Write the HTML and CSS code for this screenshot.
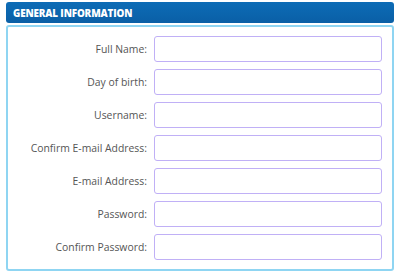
FILE: index.html
```html
<!DOCTYPE html>
<html>
<head>
<meta charset="utf-8">
<link rel="stylesheet" href="styles.css">
</head>
<body>
<div class="wrap">
  <div class="head">GENERAL INFORMATION</div>
  <div class="panel">
    <form class="form">
      <label class="lbl">Full Name:</label><input class="inp" type="text">
      <label class="lbl">Day of birth:</label><input class="inp" type="text">
      <label class="lbl">Username:</label><input class="inp" type="text">
      <label class="lbl">Confirm E-mail Address:</label><input class="inp" type="text">
      <label class="lbl">E-mail Address:</label><input class="inp" type="text">
      <label class="lbl">Password:</label><input class="inp" type="password">
      <label class="lbl">Confirm Password:</label><input class="inp" type="password">
    </form>
  </div>
</div>
</body>
</html>
```
FILE: styles.css
```css
html, body {
  margin: 0;
  padding: 0;
  background: #ffffff;
}
.wrap {
  margin: 2px 0 0 6px;
  width: 388px;
  display: flex;
  flex-direction: column;
  gap: 2px;
  font-family: "Open Sans", "Liberation Sans", sans-serif;
}
.head {
  height: 21px;
  box-sizing: border-box;
  padding-left: 7px;
  display: flex;
  align-items: center;
  background: linear-gradient(#0d6cb6, #0a5fa6);
  border-radius: 3px;
  color: #ffffff;
  font-weight: 800;
  font-size: 9.9px;
  letter-spacing: -0.15px;
}
.panel {
  border: 2px solid #8fd5f2;
  border-radius: 3px;
  padding: 9px 10px 9px 10px;
}
.form {
  margin: 0;
  display: grid;
  grid-template-columns: 1fr 228px;
  column-gap: 7px;
  row-gap: 7px;
  align-items: center;
}
.lbl {
  text-align: right;
  font-size: 10.4px;
  color: #555555;
}
.inp {
  box-sizing: border-box;
  width: 228px;
  height: 26px;
  margin: 0;
  border: 1.5px solid #c0b0f6;
  border-radius: 3px;
  background: #ffffff;
  outline: none;
}
```
